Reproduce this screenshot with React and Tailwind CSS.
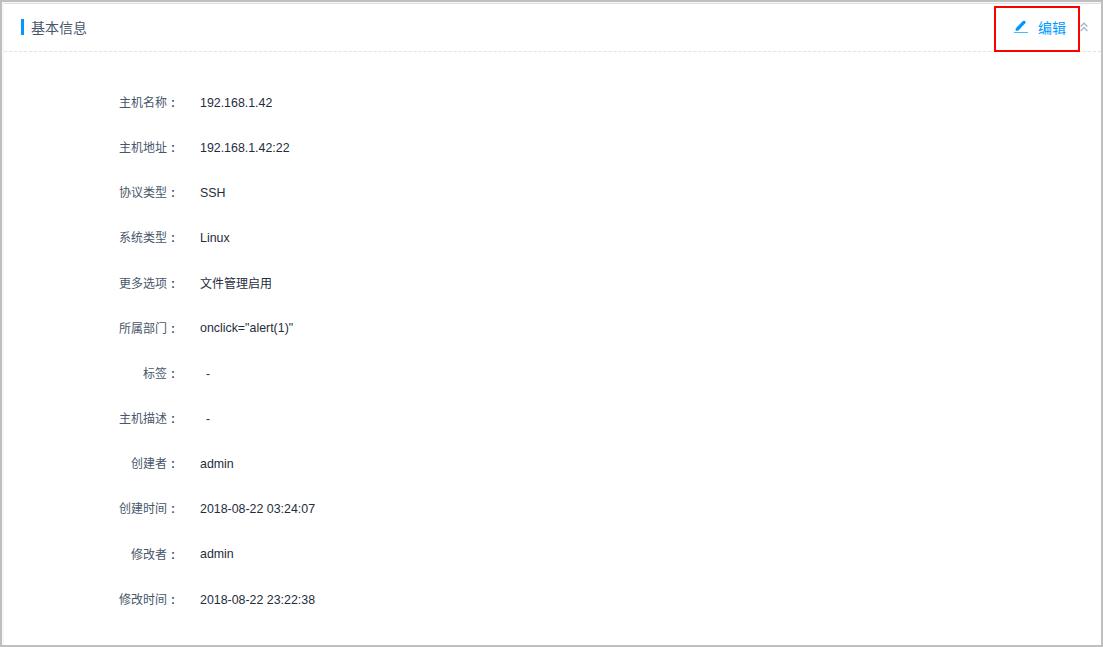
import React from "react";

const fields = [
  { label: "主机名称", value: "192.168.1.42" },
  { label: "主机地址", value: "192.168.1.42:22" },
  { label: "协议类型", value: "SSH" },
  { label: "系统类型", value: "Linux" },
  { label: "更多选项", value: "文件管理启用", cjk: true },
  { label: "所属部门", value: 'onclick="alert(1)"' },
  { label: "标签", value: "-", empty: true },
  { label: "主机描述", value: "-", empty: true },
  { label: "创建者", value: "admin" },
  { label: "创建时间", value: "2018-08-22 03:24:07" },
  { label: "修改者", value: "admin" },
  { label: "修改时间", value: "2018-08-22 23:22:38" },
];

const EditIcon = () => (
  <svg width="14" height="14" viewBox="0 0 14 14" className="-mt-0.5 shrink-0">
    <path d="M1.6 11 1.9 8.2 8.9 1.1 Q10 0.2 11.1 1.1 Q12.1 2.1 11.2 3.2 L4.4 10.4Z" fill="#0099ff" />
    <path d="M0 12.5H14" stroke="#4db8ff" strokeWidth="1" />
  </svg>
);

const CollapseIcon = () => (
  <svg width="8" height="10" viewBox="0 0 8 10" className="shrink-0">
    <path
      d="M0.6 4.6 4 1.2 7.4 4.6M0.6 8.9 4 5.5 7.4 8.9"
      fill="none"
      stroke="#a9b5c8"
      strokeWidth="1.4"
    />
  </svg>
);

const Field = ({ label, value, empty, cjk }) => (
  <div className="flex h-[45.18px] items-center text-xs">
    <dt className="flex w-[172px] shrink-0 justify-end text-[#475669]">
      <span>{label}</span>
      <span className="w-[9px] pl-1 font-bold">:</span>
    </dt>
    <dd
      className={
        empty
          ? "pl-[30px] text-[#1f2d3d]"
          : cjk
            ? "pl-6 text-[#1f2d3d]"
            : "pl-6 text-[12.4px] text-[#1f2d3d]"
      }
    >
      {value}
    </dd>
  </div>
);

export default function App() {
  return (
    <div className="h-[647px] w-[1103px] border-2 border-[#bfbfbf] bg-[#f7f7f7] pt-px pl-0.5 font-['Liberation_Sans','Noto_Sans_CJK_SC',sans-serif]">
      <section className="h-full border-t border-[#e0e0e0] bg-white">
        <header className="flex h-12 items-center border-b border-dashed border-[#dfe2e6] pr-[13px] pb-px pl-[17px]">
          <div className="-mt-px h-4 w-[3px] bg-[#0099ff]" />
          <h2 className="mt-px ml-[7px] text-sm text-[#475669]">基本信息</h2>
          <button className="mt-[3px] ml-auto flex h-[46px] w-[86px] items-center gap-2.5 border-2 border-[#ff0000] pb-0.5 pl-[18px] text-sm text-[#0099ff]">
            <EditIcon />
            <span>编辑</span>
          </button>
          <CollapseIcon />
        </header>
        <dl className="pt-[28.3px]">
          {fields.map((field) => (
            <Field key={field.label} {...field} />
          ))}
        </dl>
      </section>
    </div>
  );
}
